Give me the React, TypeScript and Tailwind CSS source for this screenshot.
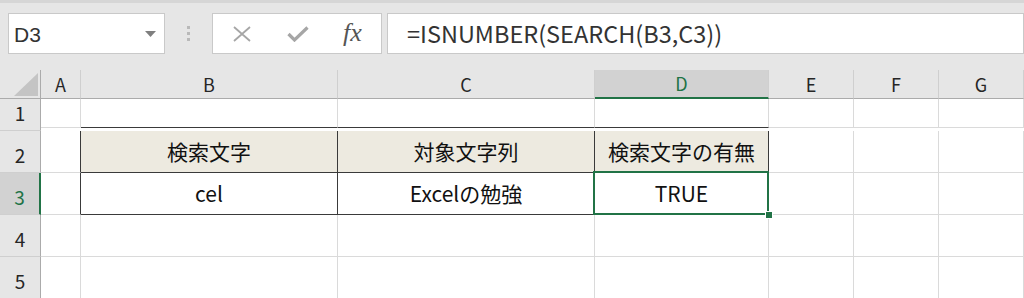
const GRID = "grid grid-cols-[41px_40px_257px_257px_174px_85px_85px_1fr]";
const CELL_FONT = "font-['Noto_Sans_CJK_JP','Noto_Sans',sans-serif]";

function ColHeader({ label, active }: { label: string; active?: boolean }) {
  return (
    <div
      className={
        active
          ? "flex items-center justify-center bg-[#d2d2d2] border-r border-r-[#cfcfcf] border-b-2 border-b-[#217346] text-[#217346] text-[18px]"
          : "flex items-center justify-center bg-[#e6e6e6] border-r border-r-[#cfcfcf] border-b border-b-[#ababab] text-[#262626] text-[18px]"
      }
    >
      {label}
    </div>
  );
}

function RowHeader({ n, active }: { n: number; active?: boolean }) {
  return (
    <div
      className={
        active
          ? "flex items-end justify-center pb-[2px] bg-[#d2d2d2] border-r-2 border-r-[#217346] border-b border-b-[#cfcfcf] text-[#217346] text-[19px]"
          : "flex items-end justify-center pb-[2px] bg-[#e6e6e6] border-r border-r-[#ababab] border-b border-b-[#cfcfcf] text-[#262626] text-[19px]"
      }
    >
      {n}
    </div>
  );
}

type CellProps = {
  h?: string;
  r?: string;
  b?: string;
  bg?: string;
  className?: string;
  children?: React.ReactNode;
};

function Cell({
  h = "h-[42px]",
  r = "border-r-[#dadada]",
  b = "border-b-[#dadada]",
  bg = "bg-white",
  className = "",
  children,
}: CellProps) {
  return (
    <div
      className={`flex items-end justify-center pb-[4px] border-r border-b text-[21px] text-[#111] ${h} ${r} ${b} ${bg} ${className}`}
    >
      {children}
    </div>
  );
}

const DR = "border-r-[#3a3a3a]";
const DB = "border-b-[#3a3a3a]";
const HEAD = "bg-[#edeae0]";

export default function App() {
  return (
    <div className="w-[1024px] h-[298px] overflow-hidden bg-white font-['Liberation_Sans',sans-serif]">
      <div className="h-[3px] bg-[#d6d6d6]" />
      {/* formula bar */}
      <div className="h-[67px] bg-[#e6e6e6] flex items-start pt-[10px] pl-[8px]">
        <div className="w-[157px] h-[41px] border border-[#c9c9c9] bg-white flex items-center justify-between pl-[5px] pr-[8px]">
          <span className="text-[21px] text-[#333] leading-none mt-[2px]">D3</span>
          <svg width="11" height="6" viewBox="0 0 11 6">
            <path d="M0 0 L11 0 L5.5 6 Z" fill="#7f7f7f" />
          </svg>
        </div>
        <div className="w-[47px] h-[41px] flex flex-col items-center justify-center gap-[3px]">
          <span className="w-[3px] h-[3px] bg-[#b9b9b9]" />
          <span className="w-[3px] h-[3px] bg-[#b9b9b9]" />
          <span className="w-[3px] h-[3px] bg-[#b9b9b9]" />
        </div>
        <div className="w-[170px] h-[41px] border border-[#c9c9c9] bg-white flex items-center">
          <svg className="ml-[20px]" width="18" height="16" viewBox="0 0 18 16">
            <path d="M1 1 L17 15 M17 1 L1 15" stroke="#a6a6a6" strokeWidth="1.8" fill="none" />
          </svg>
          <svg className="ml-[36px]" width="22" height="16" viewBox="0 0 22 16">
            <path d="M1.5 8 L7.5 14 L20.5 1.5" stroke="#a6a6a6" strokeWidth="3.2" fill="none" />
          </svg>
          <span className="ml-[34px] font-['Liberation_Serif',serif] italic text-[26px] text-[#555] leading-none mb-[2px]">
            fx
          </span>
        </div>
        <div className="ml-[5px] flex-1 h-[41px] border border-[#c9c9c9] bg-white flex items-center pl-[19px]">
          <span className={`${CELL_FONT} text-[23.5px] text-[#333] leading-none`}>
            =ISNUMBER(SEARCH(B3,C3))
          </span>
        </div>
      </div>

      {/* sheet */}
      <div className={`${GRID} ${CELL_FONT}`}>
        {/* header row */}
        <div className="relative h-[29px] bg-[#e6e6e6] border-r border-r-[#ababab] border-b border-b-[#ababab]">
          <svg className="absolute right-[2px] bottom-[2px]" width="24" height="23" viewBox="0 0 24 23">
            <path d="M24 0 L24 23 L0 23 Z" fill="#c4c4c4" />
          </svg>
        </div>
        <ColHeader label="A" />
        <ColHeader label="B" />
        <ColHeader label="C" />
        <ColHeader label="D" active />
        <ColHeader label="E" />
        <ColHeader label="F" />
        <ColHeader label="G" />

        {/* row 1 */}
        <RowHeader n={1} />
        <Cell h="h-[29px]" />
        <Cell h="h-[29px]" b={DB} />
        <Cell h="h-[29px]" b={DB} />
        <Cell h="h-[29px]" b={DB} />
        <Cell h="h-[29px]" />
        <Cell h="h-[29px]" />
        <Cell h="h-[29px]" />

        {/* row 2 */}
        <RowHeader n={2} />
        <Cell r={DR} />
        <Cell r={DR} b={DB} bg={HEAD}>検索文字</Cell>
        <Cell r={DR} b={DB} bg={HEAD}>対象文字列</Cell>
        <Cell r={DR} b={DB} bg={HEAD}>検索文字の有無</Cell>
        <Cell />
        <Cell />
        <Cell />

        {/* row 3 */}
        <RowHeader n={3} active />
        <Cell r={DR} />
        <Cell r={DR} b={DB}>cel</Cell>
        <Cell r={DR} b={DB}>Excelの勉強</Cell>
        <Cell r={DR} b={DB} className="relative">
          TRUE
          <div className="absolute left-[-2px] top-[-2px] right-[-1px] bottom-[-1px] border-2 border-[#217346]" />
          <div className="absolute right-[-5px] bottom-[-5px] w-[8px] h-[8px] bg-[#217346] border border-white" />
        </Cell>
        <Cell />
        <Cell />
        <Cell />

        {/* rows 4, 5 */}
        {[4, 5].map((n) => (
          <div key={n} className="contents">
            <RowHeader n={n} />
            <Cell />
            <Cell />
            <Cell />
            <Cell />
            <Cell />
            <Cell />
            <Cell />
          </div>
        ))}
      </div>
    </div>
  );
}
